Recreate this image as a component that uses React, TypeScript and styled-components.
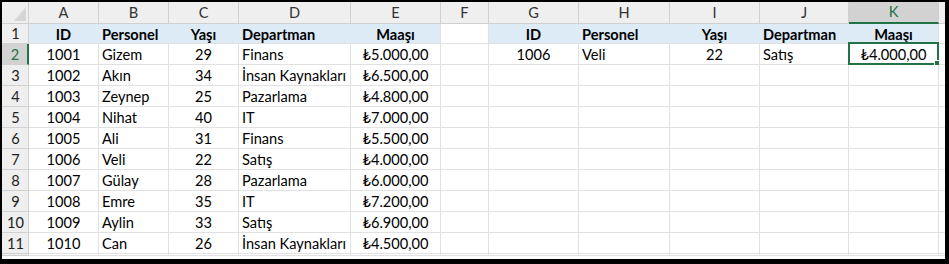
import React from "react";
import styled, { createGlobalStyle } from "styled-components";

const GlobalStyle = createGlobalStyle`
  html, body {
    margin: 0;
    padding: 0;
    background: #ffffff;
  }
  body {
    font-family: Lato, "Noto Sans", "Liberation Sans", sans-serif;
  }
`;

const GRID = "#e1e1e1";
const HEADER_LINE = "#d0d0d0";
const FILL = "#ddebf7";
const GREEN = "#217346";

type Align = "left" | "center" | "right";

type Column = { key: string; width: number; align: Align };

const columns: Column[] = [
  { key: "A", width: 70, align: "center" },
  { key: "B", width: 70, align: "left" },
  { key: "C", width: 70, align: "center" },
  { key: "D", width: 112, align: "left" },
  { key: "E", width: 90, align: "center" },
  { key: "F", width: 48, align: "left" },
  { key: "G", width: 90, align: "center" },
  { key: "H", width: 91, align: "left" },
  { key: "I", width: 90, align: "center" },
  { key: "J", width: 89, align: "left" },
  { key: "K", width: 90, align: "center" },
];

const header = ["ID", "Personel", "Yaşı", "Departman", "Maaşı"];

const people = [
  ["1001", "Gizem", "29", "Finans", "₺5.000,00"],
  ["1002", "Akın", "34", "İnsan Kaynakları", "₺6.500,00"],
  ["1003", "Zeynep", "25", "Pazarlama", "₺4.800,00"],
  ["1004", "Nihat", "40", "IT", "₺7.000,00"],
  ["1005", "Ali", "31", "Finans", "₺5.500,00"],
  ["1006", "Veli", "22", "Satış", "₺4.000,00"],
  ["1007", "Gülay", "28", "Pazarlama", "₺6.000,00"],
  ["1008", "Emre", "35", "IT", "₺7.200,00"],
  ["1009", "Aylin", "33", "Satış", "₺6.900,00"],
  ["1010", "Can", "26", "İnsan Kaynakları", "₺4.500,00"],
];

const lookup = ["1006", "Veli", "22", "Satış", "₺4.000,00"];

// row 1 holds the two header blocks, the rest are data rows
const rows: string[][] = [
  [...header, "", ...header],
  ...people.map((p, i) => (i === 0 ? [...p, "", ...lookup] : [...p, "", "", "", "", "", ""])),
];

const rowHeights = [20, ...Array(10).fill(21)];

const Frame = styled.div`
  width: 949px;
  height: 264px;
  box-sizing: border-box;
  border-style: solid;
  border-color: #000000;
  border-width: 2px 4px 5px 2px;
  overflow: hidden;
  background: #ffffff;
`;

const Sheet = styled.div<{ $cols: string; $rows: string }>`
  display: grid;
  grid-template-columns: ${({ $cols }) => $cols};
  grid-template-rows: ${({ $rows }) => $rows};
  font-size: 14.6px;
  color: #000000;
`;

const Corner = styled.div`
  position: relative;
  background: #efefef;
  border-right: 1px solid ${HEADER_LINE};
  border-bottom: 1px solid ${HEADER_LINE};
  box-sizing: border-box;
  &::after {
    content: "";
    position: absolute;
    right: 2px;
    bottom: 2px;
    width: 0;
    height: 0;
    border-left: 12px solid transparent;
    border-bottom: 14px solid #d6d6d6;
  }
`;

const ColHeader = styled.div<{ $selected?: boolean }>`
  display: flex;
  align-items: flex-end;
  justify-content: center;
  padding-bottom: 2px;
  box-sizing: border-box;
  background: ${({ $selected }) => ($selected ? "#d2d2d2" : "#efefef")};
  color: ${({ $selected }) => ($selected ? GREEN : "#333333")};
  border-right: 1px solid ${HEADER_LINE};
  border-bottom: ${({ $selected }) => ($selected ? `2px solid ${GREEN}` : `1px solid ${HEADER_LINE}`)};
  font-size: 14.6px;
`;

const RowHeader = styled.div<{ $selected?: boolean }>`
  display: flex;
  align-items: center;
  justify-content: center;
  box-sizing: border-box;
  background: ${({ $selected }) => ($selected ? "#d2d2d2" : "#efefef")};
  color: ${({ $selected }) => ($selected ? GREEN : "#222222")};
  border-right: ${({ $selected }) => ($selected ? `2px solid ${GREEN}` : `1px solid ${HEADER_LINE}`)};
  border-bottom: 1px solid ${HEADER_LINE};
  padding-left: 1px;
`;

const Cell = styled.div<{ $align: Align; $bold?: boolean; $fill?: boolean; $joinRight?: boolean }>`
  position: relative;
  display: flex;
  align-items: center;
  justify-content: ${({ $align }) =>
    $align === "center" ? "center" : $align === "right" ? "flex-end" : "flex-start"};
  padding: 1px 3px 0 3px;
  box-sizing: border-box;
  white-space: nowrap;
  background: ${({ $fill }) => ($fill ? FILL : "#ffffff")};
  border-right: 1px solid ${({ $joinRight }) => ($joinRight ? FILL : GRID)};
  border-bottom: 1px solid ${GRID};
  font-weight: ${({ $bold }) => ($bold ? 700 : 400)};
`;

const Selection = styled.div`
  position: absolute;
  left: -1px;
  top: -2px;
  right: -1px;
  bottom: -1px;
  border: 2px solid ${GREEN};
  pointer-events: none;
`;

const Handle = styled.div`
  position: absolute;
  right: -4px;
  bottom: -4px;
  width: 5px;
  height: 5px;
  background: ${GREEN};
  border: 1px solid #ffffff;
`;

const isFilled = (r: number, c: number) => r === 0 && c !== 5;

const App = () => {
  const colTemplate = ["27px", ...columns.map((c) => `${c.width}px`), "1fr"].join(" ");
  const rowTemplate = ["22px", ...rowHeights.map((h) => `${h}px`), "1fr"].join(" ");

  return (
    <>
      <GlobalStyle />
      <Frame>
        <Sheet $cols={colTemplate} $rows={rowTemplate}>
          <Corner />
          {columns.map((c) => (
            <ColHeader key={c.key} $selected={c.key === "K"}>
              {c.key}
            </ColHeader>
          ))}
          <ColHeader />

          {rows.map((row, r) => (
            <React.Fragment key={r}>
              <RowHeader $selected={r === 1}>{r + 1}</RowHeader>
              {columns.map((col, c) => (
                <Cell
                  key={col.key}
                  $align={col.align}
                  $bold={r === 0}
                  $fill={isFilled(r, c)}
                  $joinRight={isFilled(r, c) && isFilled(r, c + 1) && c !== 4 && c !== 10}
                >
                  {row[c]}
                  {r === 1 && col.key === "K" && (
                    <Selection>
                      <Handle />
                    </Selection>
                  )}
                </Cell>
              ))}
              <Cell $align="left" />
            </React.Fragment>
          ))}

          <RowHeader />
          {columns.map((col) => (
            <Cell key={col.key} $align="left" />
          ))}
          <Cell $align="left" />
        </Sheet>
      </Frame>
    </>
  );
};

export default App;
